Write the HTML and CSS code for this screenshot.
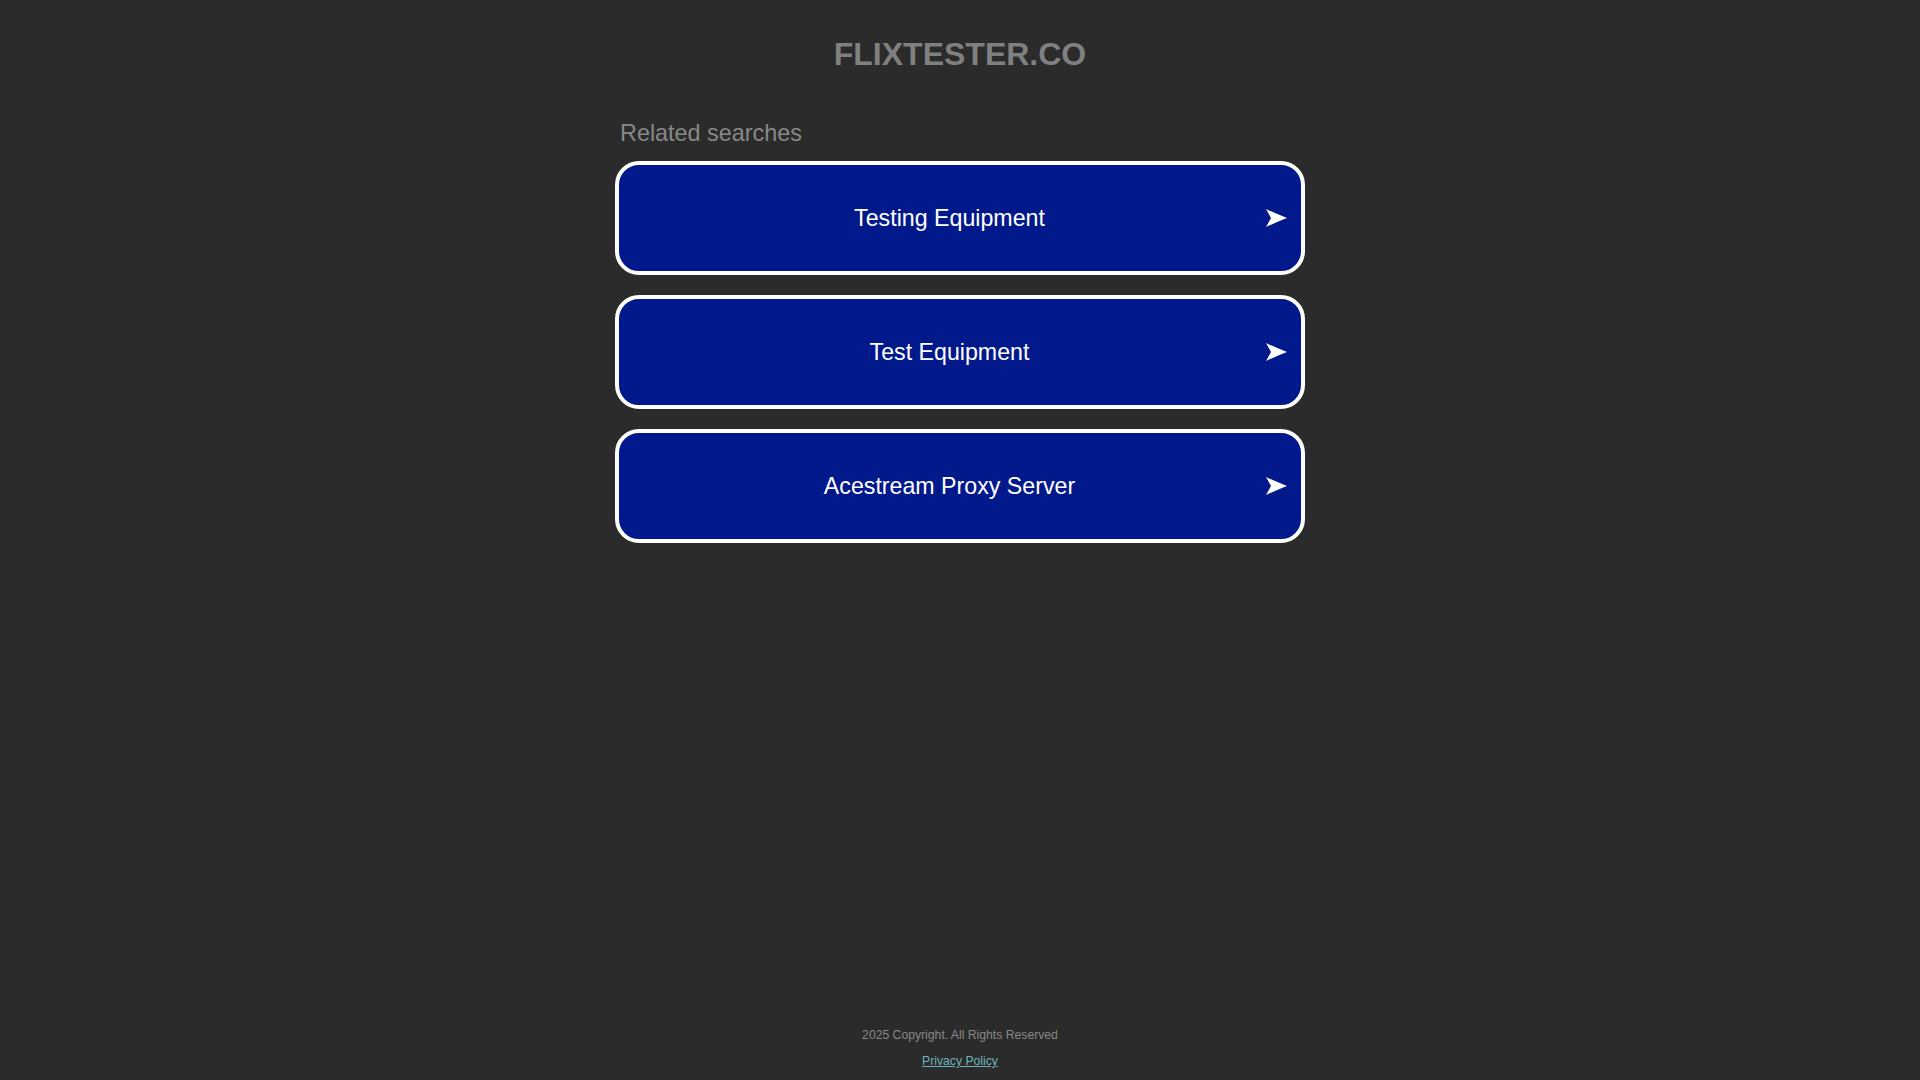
FILE: index.html
```html
<!DOCTYPE html>
<html lang="en">
<head>
<meta charset="utf-8">
<title>flixtester.co</title>
<link rel="stylesheet" href="styles.css">
</head>
<body>
<div class="page">
  <header class="header">
    <h1 class="domain">FLIXTESTER.CO</h1>
  </header>
  <main class="content">
    <h2 class="related-title">Related searches</h2>
    <div class="tiles">
      <a class="tile" href="#">
        <span class="tile-text">Testing Equipment</span>
        <svg class="tile-arrow" viewBox="0 0 21 18" width="21" height="18" aria-hidden="true"><path d="M0 0 Q10.5 5 21 9 Q10.5 13 0 18 L5 9 Z" fill="#ffffff"/></svg>
      </a>
      <a class="tile" href="#">
        <span class="tile-text">Test Equipment</span>
        <svg class="tile-arrow" viewBox="0 0 21 18" width="21" height="18" aria-hidden="true"><path d="M0 0 Q10.5 5 21 9 Q10.5 13 0 18 L5 9 Z" fill="#ffffff"/></svg>
      </a>
      <a class="tile" href="#">
        <span class="tile-text">Acestream Proxy Server</span>
        <svg class="tile-arrow" viewBox="0 0 21 18" width="21" height="18" aria-hidden="true"><path d="M0 0 Q10.5 5 21 9 Q10.5 13 0 18 L5 9 Z" fill="#ffffff"/></svg>
      </a>
    </div>
  </main>
  <footer class="footer">
    <p class="copyright">2025 Copyright. All Rights Reserved</p>
    <p class="privacy"><a href="#">Privacy Policy</a></p>
  </footer>
</div>
</body>
</html>
```

FILE: styles.css
```css
html, body {
  margin: 0;
  padding: 0;
  background: #2b2b2b;
}

body {
  font-family: "Liberation Sans", Arial, sans-serif;
}

.page {
  min-height: 100vh;
  display: flex;
  flex-direction: column;
  align-items: center;
  box-sizing: border-box;
}

.header {
  padding-top: 36px;
  width: 100%;
  text-align: center;
}

.domain {
  margin: 0;
  font-size: 32px;
  line-height: 36px;
  font-weight: bold;
  color: #808080;
}

.content {
  width: 690px;
  margin-top: 48px;
  flex: 1;
}

.related-title {
  margin: 0 0 14px 0;
  padding: 0 5px;
  font-size: 23.4px;
  line-height: 27px;
  font-weight: normal;
  color: #888888;
}

.tiles {
  display: flex;
  flex-direction: column;
  gap: 20px;
}

.tile {
  display: flex;
  align-items: center;
  height: 114px;
  box-sizing: border-box;
  border: 4px solid #ffffff;
  border-radius: 24px;
  background: #02198b;
  padding: 0 14px;
  color: #ffffff;
  text-decoration: none;
}

.tile-text {
  flex: 1;
  text-align: center;
  font-size: 23.2px;
  line-height: 27px;
}

.tile-arrow {
  display: block;
  flex: none;
}

.footer {
  padding-bottom: 12px;
  display: flex;
  flex-direction: column;
  align-items: center;
  gap: 12px;
}

.copyright,
.privacy {
  margin: 0;
  font-size: 12.2px;
  line-height: 14px;
  color: #888888;
}

.privacy a {
  color: #6cb4ba;
  text-decoration: underline;
}
```
